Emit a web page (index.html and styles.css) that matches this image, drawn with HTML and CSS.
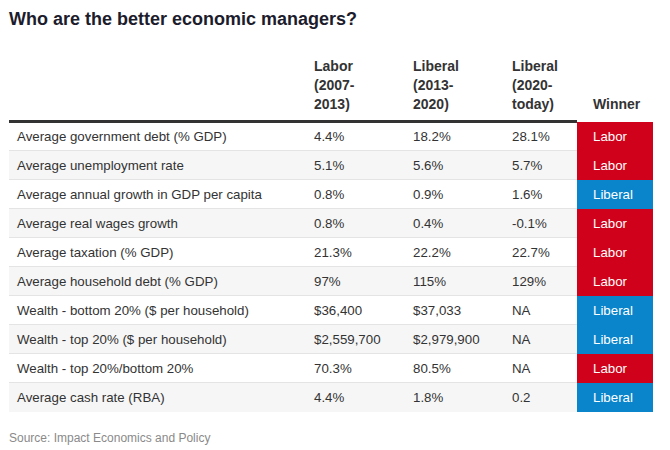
FILE: index.html
```html
<!DOCTYPE html>
<html>
<head>
<meta charset="utf-8">
<link rel="stylesheet" href="styles.css">
</head>
<body>
<div class="wrap">
  <h1 class="title">Who are the better economic managers?</h1>
  <table class="tbl">
    <thead>
      <tr>
        <th class="c-label"></th>
        <th class="c-num">Labor<br>(2007-<br>2013)</th>
        <th class="c-num">Liberal<br>(2013-<br>2020)</th>
        <th class="c-num3">Liberal<br>(2020-<br>today)</th>
        <th class="c-win">Winner</th>
      </tr>
    </thead>
    <tbody>
      <tr><td>Average government debt (% GDP)</td><td>4.4%</td><td>18.2%</td><td>28.1%</td><td class="w lab">Labor</td></tr>
      <tr><td>Average unemployment rate</td><td>5.1%</td><td>5.6%</td><td>5.7%</td><td class="w lab">Labor</td></tr>
      <tr><td>Average annual growth in GDP per capita</td><td>0.8%</td><td>0.9%</td><td>1.6%</td><td class="w lib">Liberal</td></tr>
      <tr><td>Average real wages growth</td><td>0.8%</td><td>0.4%</td><td>-0.1%</td><td class="w lab">Labor</td></tr>
      <tr><td>Average taxation (% GDP)</td><td>21.3%</td><td>22.2%</td><td>22.7%</td><td class="w lab">Labor</td></tr>
      <tr><td>Average household debt (% GDP)</td><td>97%</td><td>115%</td><td>129%</td><td class="w lab">Labor</td></tr>
      <tr><td>Wealth - bottom 20% ($ per household)</td><td>$36,400</td><td>$37,033</td><td>NA</td><td class="w lib">Liberal</td></tr>
      <tr><td>Wealth - top 20% ($ per household)</td><td>$2,559,700</td><td>$2,979,900</td><td>NA</td><td class="w lib">Liberal</td></tr>
      <tr><td>Wealth - top 20%/bottom 20%</td><td>70.3%</td><td>80.5%</td><td>NA</td><td class="w lab">Labor</td></tr>
      <tr><td>Average cash rate (RBA)</td><td>4.4%</td><td>1.8%</td><td>0.2</td><td class="w lib">Liberal</td></tr>
    </tbody>
  </table>
  <p class="source">Source: Impact Economics and Policy</p>
</div>
</body>
</html>
```

FILE: styles.css
```css
* { box-sizing: border-box; }
html, body { margin: 0; padding: 0; background: #fff; }
body { font-family: "Liberation Sans", Arial, sans-serif; color: #333; }
.wrap { padding: 8px 9px 0 9px; width: 670px; }
.title {
  margin: 0;
  font-size: 18px;
  line-height: 22px;
  font-weight: bold;
  color: #1c1c2c;
}
.tbl {
  margin-top: 27px;
  border-collapse: collapse;
  width: 644px;
  table-layout: fixed;
}
.tbl th {
  text-align: left;
  vertical-align: bottom;
  font-size: 14px;
  line-height: 19px;
  font-weight: bold;
  color: #333;
  padding: 0 9px 6px 9px;
  border-bottom: 3px solid #333;
}
.tbl th.c-win { border-bottom: none; padding: 0 0 8px 16px; }
.c-label { width: 296px; }
.c-num { width: 99px; }
.c-num3 { width: 74px; }
.c-win { width: 76px; }
.tbl td {
  font-size: 13.3px;
  height: 29px;
  padding: 0 8px;
  vertical-align: middle;
  border-top: 1px solid #e4e4e4;
  color: #333;
}
.tbl td:nth-child(n+2) { padding-left: 9px; }
.tbl tbody tr:first-child td { border-top: none; }
.tbl tbody tr:nth-child(even) td { background: #f6f6f6; }
.tbl td.w { color: #fff; padding-left: 16px; border-top: none; }
.tbl tbody tr td.lab { background: #d0021b; }
.tbl tbody tr td.lib { background: #0a85cc; }
.source {
  margin: 19px 0 0 0;
  font-size: 12px;
  color: #8a8a8a;
}
```
